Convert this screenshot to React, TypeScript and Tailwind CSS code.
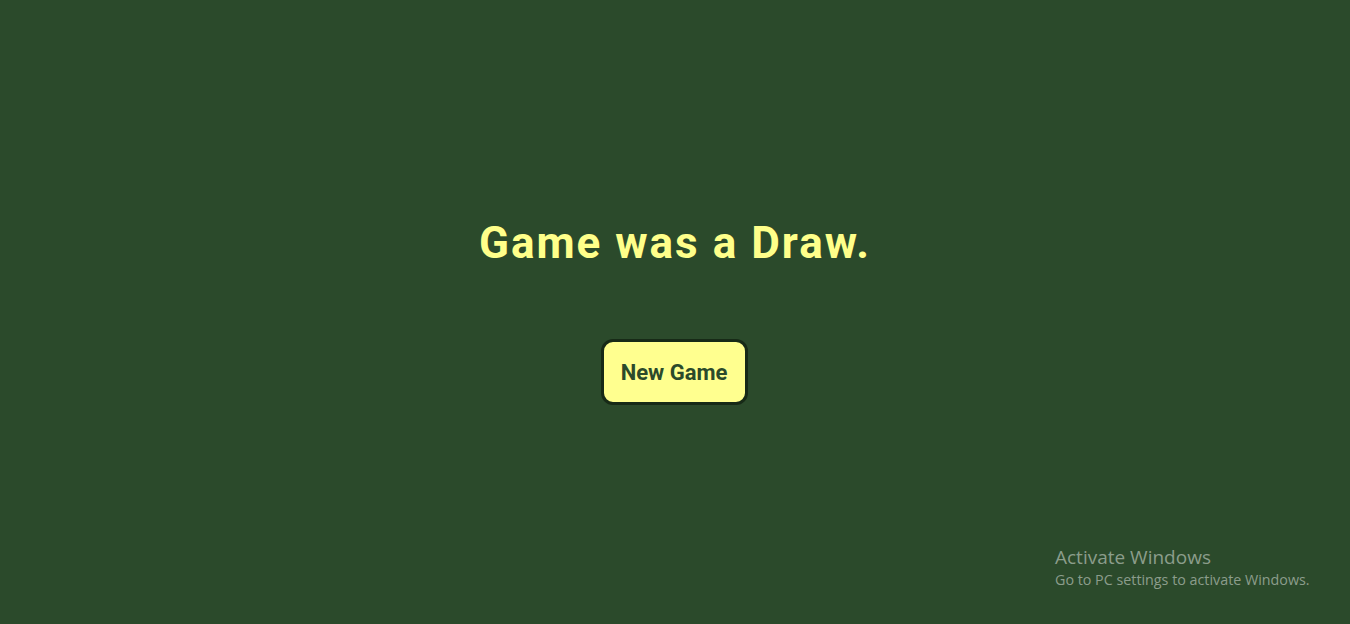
export default function App() {
  return (
    <div className="relative h-[624px] w-full overflow-hidden bg-[#2b4a2b] font-['Roboto',sans-serif]">
      <div className="flex h-full flex-col items-center justify-center">
        <h1 className="text-[44px] font-bold leading-[48px] tracking-[2px] text-[#ffff8a]">
          Game was a Draw.
        </h1>
        <button className="mt-[72px] mr-[2px] h-[66px] w-[147px] rounded-[12px] border-[3px] border-[#172a17] bg-[#ffff8f] text-[22px] font-bold text-[#2b4a2b]">
          New Game
        </button>
      </div>

      {/* Windows activation watermark */}
      <div className="absolute left-[1055px] top-[545px] font-['Open_Sans',sans-serif] text-[#8b9d8b]">
        <div className="text-[19px] leading-[25px]">Activate Windows</div>
        <div className="text-[14.3px] leading-[20px]">Go to PC settings to activate Windows.</div>
      </div>
    </div>
  );
}
